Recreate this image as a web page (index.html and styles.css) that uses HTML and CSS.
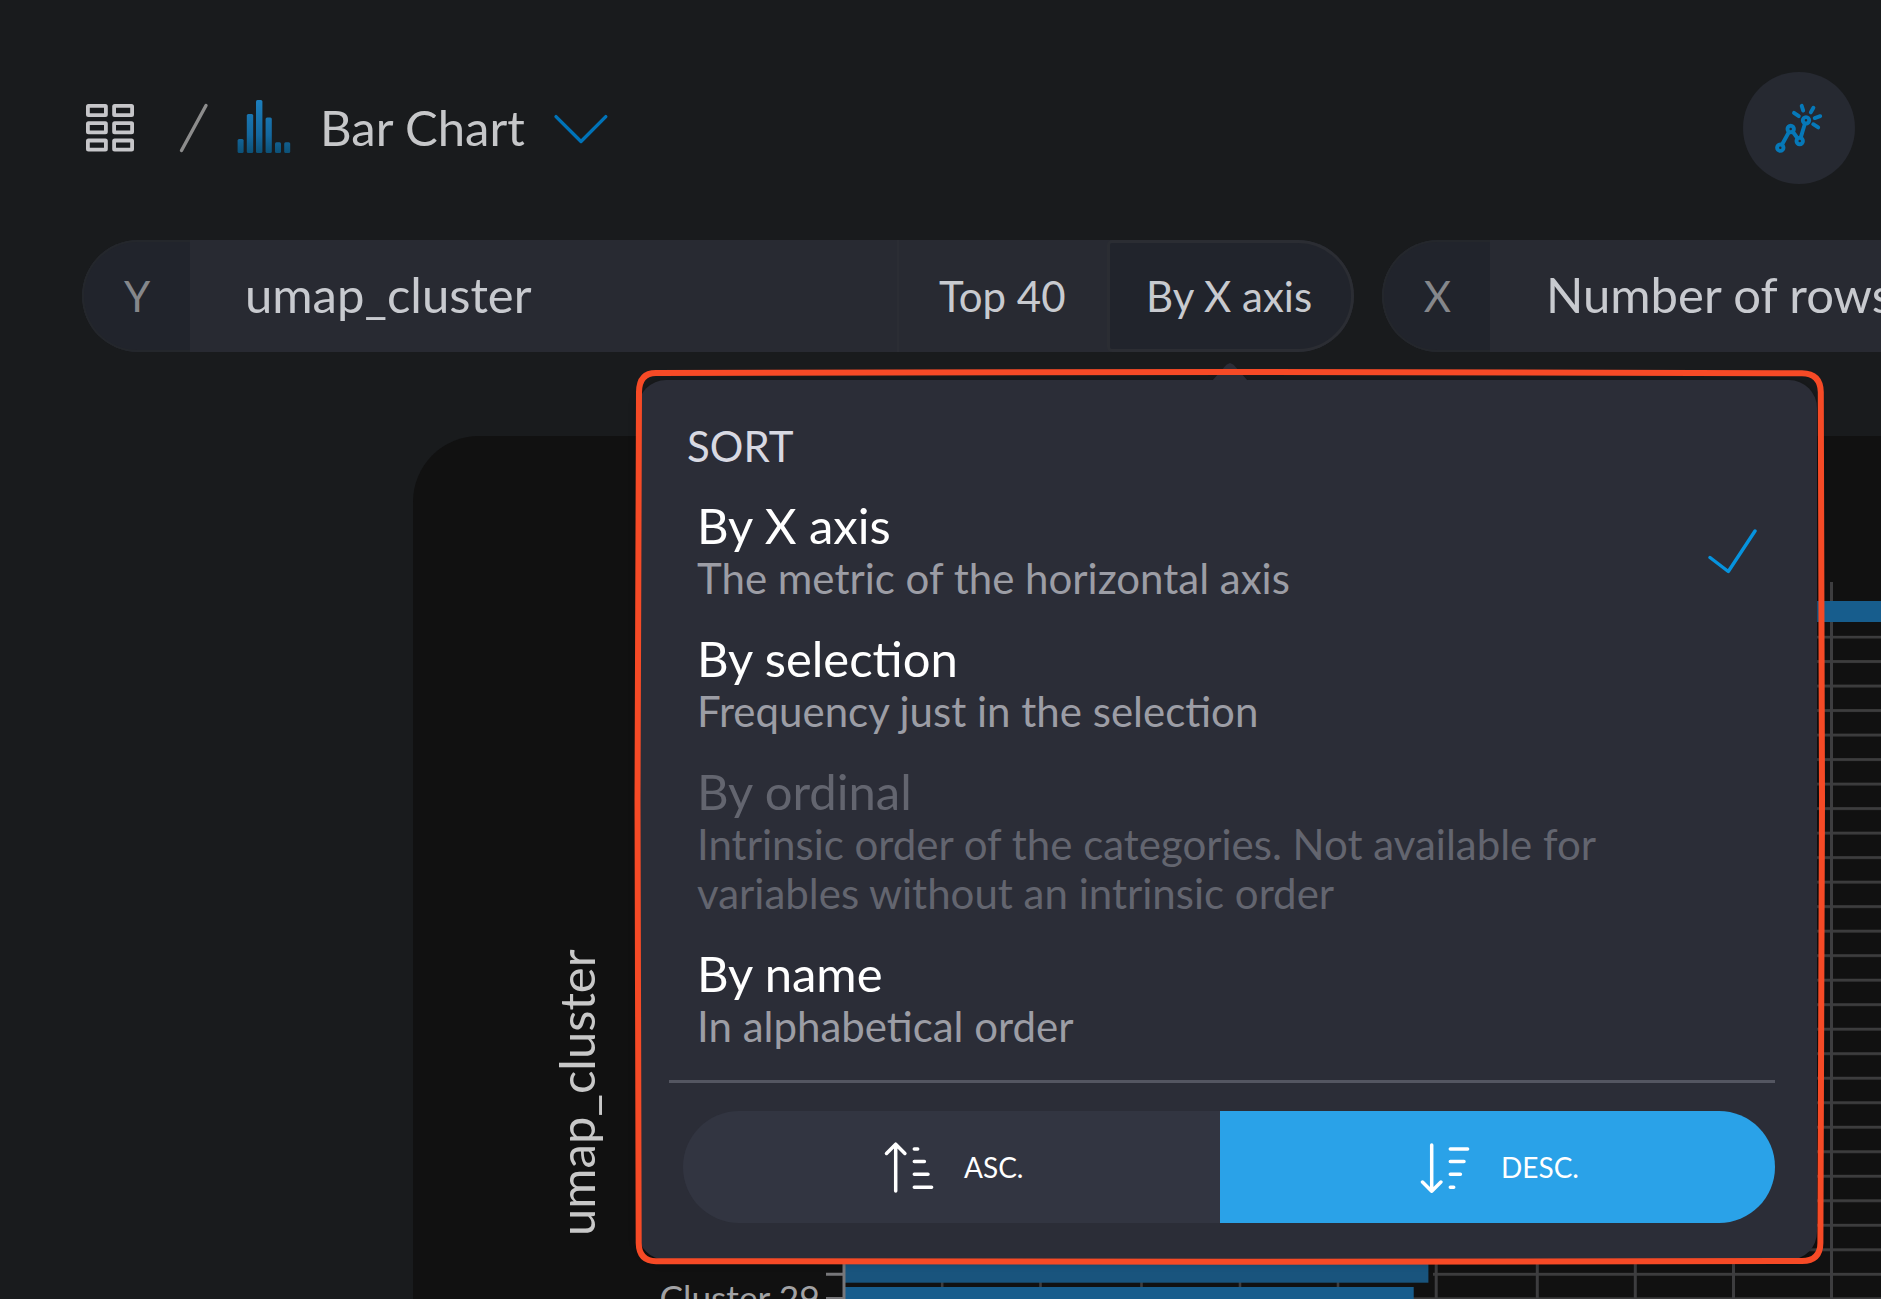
FILE: index.html
```html
<!DOCTYPE html>
<html lang="en">
<head>
<meta charset="utf-8">
<title>Bar Chart</title>
<link rel="stylesheet" href="styles.css">
</head>
<body>
<header class="topbar">
  <svg class="grid-icon" width="48" height="48" viewBox="0 0 48 48" fill="none" stroke="#c6c6c9" stroke-width="3.8">
    <rect x="1.9" y="1.9" width="18" height="9.2" rx=".6"/><rect x="28.1" y="1.9" width="18" height="9.2" rx=".6"/>
    <rect x="1.9" y="19.2" width="18" height="9.2" rx=".6"/><rect x="28.1" y="19.2" width="18" height="9.2" rx=".6"/>
    <rect x="1.9" y="36.5" width="18" height="9.2" rx=".6"/><rect x="28.1" y="36.5" width="18" height="9.2" rx=".6"/>
  </svg>
  <svg class="slash" width="30" height="50" viewBox="0 0 30 50" fill="none" stroke="#8c8c8c" stroke-width="3.4" stroke-linecap="round"><path d="M27 2.5 2.5 47.5"/></svg>
  <svg class="bars-icon" width="54" height="54" viewBox="0 0 54 54">
    <defs><linearGradient id="blue" gradientUnits="userSpaceOnUse" x1="0" y1="0" x2="0" y2="54"><stop offset="0" stop-color="#1c7ebc"/><stop offset=".65" stop-color="#14689f"/><stop offset="1" stop-color="#0c5075"/></linearGradient></defs>
    <g fill="url(#blue)">
      <rect x=".6" y="39" width="6" height="14" rx="1.5"/><rect x="9.8" y="14" width="6.4" height="39" rx="1.5"/><rect x="19" y="0" width="6.4" height="53" rx="1.5"/>
      <rect x="28.6" y="17.6" width="6.2" height="35.4" rx="1.5"/><rect x="38" y="42.3" width="6" height="10.7" rx="1.5"/><rect x="47.2" y="42.3" width="6" height="10.7" rx="1.5"/>
    </g>
  </svg>
  <h1 class="title">Bar Chart</h1>
  <svg class="chevron" width="56" height="32" viewBox="0 0 56 32" fill="none" stroke="#0073b8" stroke-width="3.4" stroke-linecap="round" stroke-linejoin="round"><path d="M3 3.6 28 28.5 52.8 3.6"/></svg>
  <button class="insight">
    <svg width="112" height="112" viewBox="1743 72 112 112" fill="none" stroke="#0678b8" stroke-width="3.9" stroke-linecap="round">
      <circle cx="1780.3" cy="147.7" r="3.2"/><circle cx="1790.7" cy="129" r="3.2"/><circle cx="1799.7" cy="141" r="3.2"/><circle cx="1806" cy="120.3" r="3.2"/>
      <path d="M1782.2 144.3 1788.8 132.3M1793 132 1797.4 138M1800.8 137.4 1804.8 124M1794 112.8l4.8 3.3M1801.7 105.8l1.5 4.8M1813.4 107.8l-2.6 4.6M1820.2 116.2l-5.5 1.9M1813.2 124.2l5 3.2"/>
    </svg>
  </button>
</header>

<section class="axes">
  <div class="pill pill-y">
    <span class="axis">Y</span><span class="field">umap_cluster</span><span class="top">Top 40</span><span class="sort">By X axis</span>
  </div>
  <div class="pill pill-x">
    <span class="axis">X</span><span class="field">Number of rows</span>
  </div>
</section>

<main class="chart">
  <div class="y-title">umap_cluster</div>
  <svg class="plot" width="1220" height="863" viewBox="661 436 1220 863">
    <defs>
      <pattern id="rows" patternUnits="userSpaceOnUse" x="845" y="635.6" width="40" height="24.51"><rect width="40" height="2.8" fill="#3d3d3e"/></pattern>
    </defs>
    <rect x="845" y="635.6" width="1036" height="664" fill="url(#rows)"/>
    <path d="M942.2 582V1299M1040.5 582V1299M1141.5 582V1299M1240 582V1299M1338 582V1299M1436.2 582V1299M1537.3 582V1299M1635.3 582V1299M1733.5 582V1299M1831.5 582V1299" stroke="#3d3d3f" stroke-width="3" fill="none"/>
    <rect x="845" y="601" width="1036" height="21" fill="#175d8d"/>
    <path d="M845 1256H1433V1287H845Z" fill="#111"/>
    <path d="M942.2 1280V1290M1040.5 1280V1290M1141.5 1280V1290M1240 1280V1290M1338 1280V1290" stroke="#3d3d3f" stroke-width="2.6"/>
    <rect x="845" y="1260" width="583.4" height="22.7" fill="#19547d"/>
    <rect x="845" y="1287" width="568.7" height="12" fill="#175d8d"/>
    <path d="M844 1256V1299M826 1274.2H844M826 1298.4H844" stroke="#77777a" stroke-width="3"/>
    <text class="tick" x="659.5" y="1310.5">Cluster 29</text>
  </svg>
</main>

<div class="menu">
  <div class="menu-arrow"></div>
  <h2 class="menu-title">SORT</h2>
  <ul class="options">
    <li class="option">
      <div><div class="name">By X axis</div><div class="desc">The metric of the horizontal axis</div></div>
      <svg class="check" width="50" height="46" viewBox="0 0 50 46" fill="none" stroke="#0693de" stroke-width="3.4" stroke-linecap="round" stroke-linejoin="round"><path d="M3 29.5 21.3 43.5 48 3"/></svg>
    </li>
    <li class="option"><div><div class="name">By selection</div><div class="desc">Frequency just in the selection</div></div></li>
    <li class="option disabled"><div><div class="name">By ordinal</div><div class="desc">Intrinsic order of the categories. Not available for<br>variables without an intrinsic order</div></div></li>
    <li class="option"><div><div class="name">By name</div><div class="desc">In alphabetical order</div></div></li>
  </ul>
  <div class="direction">
    <button class="dir dir-asc">
      <svg width="50" height="52" viewBox="0 0 50 52" fill="none" stroke="#fff" stroke-width="3.5" stroke-linecap="round" stroke-linejoin="round"><path d="M11.7 50V3.5M2.5 12.5 11.7 3.2 20.9 12.5M30.3 8h3.4M30.3 20.4h10.1M30.3 33.3h13.7M30.3 46.2h17.3"/></svg>
      <span>ASC.</span>
    </button>
    <button class="dir dir-desc">
      <svg width="50" height="52" viewBox="0 0 50 52" fill="none" stroke="#fff" stroke-width="3.5" stroke-linecap="round" stroke-linejoin="round"><path d="M11.7 4V50M2.5 41 11.7 50.2 20.9 41M30.3 8h17.3M30.3 20.4h13.7M30.3 33.3h10.1M30.3 46.2h3.4"/></svg>
      <span>DESC.</span>
    </button>
  </div>
</div>

<svg class="highlight" width="1200" height="904" viewBox="630 365 1200 904" fill="none" stroke="#f64a26" stroke-width="6"><path d="M656 373 1230 372 1802 373.2Q1820.4 373.5 1820.8 392L1822 800 1820.4 1243Q1820.2 1261 1802 1261L1230 1261.8 656 1261.2Q639 1261 638.7 1243L637.5 800 639 392Q639.2 373 656 373Z"/></svg>
</body>
</html>
```
FILE: styles.css
```css
* { box-sizing: border-box; }
body {
  position: relative;
  width: 1881px;
  height: 1299px;
  margin: 0;
  overflow: hidden;
  background: #191b1d;
  color: #c8cacf;
  font-family: Lato, "Open Sans", sans-serif;
}
h1, h2, ul { margin: 0; padding: 0; font-weight: 400; list-style: none; }
button { border: 0; padding: 0; font: inherit; color: inherit; }
svg { display: block; flex: none; }

.topbar {
  display: flex;
  align-items: flex-start;
  height: 240px;
  padding: 72px 26px 0 86px;
}
.grid-icon { margin-top: 32px; }
.slash { margin: 31px 0 0 45px; }
.bars-icon { margin: 28px 0 0 28px; }
.title {
  width: 233px;
  margin: 26px 0 0 29px;
  font-size: 49px;
  line-height: 58px;
  color: #c6c7c9;
  white-space: nowrap;
}
.chevron { margin-top: 41px; }
.insight { width: 112px; height: 112px; margin-left: auto; border-radius: 50%; background: #262931; }

.axes { display: flex; gap: 28px; width: 1881px; height: 112px; padding-left: 82px; overflow: hidden; }
.pill {
  display: flex;
  align-items: stretch;
  height: 112px;
  line-height: 112px;
  white-space: nowrap;
  overflow: hidden;
  background: #282a32;
}
.pill-y { flex: none; width: 1272px; border-radius: 56px; }
.pill-x { flex: 1; min-width: 0; border-radius: 56px 0 0 56px; }
.axis {
  flex: none;
  width: 108px;
  border: 2px solid #24272c;
  border-right: 0;
  border-radius: 56px 0 0 56px;
  background: #21242c;
  color: #85878b;
  font-size: 42px;
  line-height: 108px;
  text-align: center;
}
.pill-x .axis { padding-left: 1px; }
.field { flex: 1; min-width: 0; padding-left: 55px; font-size: 49px; line-height: 109px; }
.pill-x .field { padding-left: 56px; }
.top { width: 210px; border-left: 2px solid #2b2d34; padding-left: 40px; font-size: 42px; }
.sort {
  width: 247px;
  border: 3px solid #2b2d33;
  border-radius: 5px 56px 56px 5px;
  padding-left: 36px;
  background: #21242c;
  font-size: 42px;
  line-height: 106px;
}

.chart {
  display: flex;
  justify-content: space-between;
  height: 863px;
  margin: 84px 0 0 413px;
  border-radius: 66px 0 0 0;
  background: #111;
}
.y-title {
  width: 248px;
  padding: 63px 134px 0 0;
  font-size: 49px;
  line-height: 58px;
  color: #c8c8c8;
  writing-mode: vertical-rl;
  transform: rotate(180deg);
}
.tick { font-size: 35.3px; fill: #a2a2a4; }

.menu {
  position: absolute;
  left: 638px;
  top: 380px;
  width: 1179px;
  height: 880px;
  padding: 41px 42px 0 31px;
  border-radius: 28px;
  background: #2b2d37;
  box-shadow: 0 2px 10px rgba(0, 0, 0, .35);
}
.menu-arrow {
  position: absolute;
  left: 574px;
  top: -17px;
  width: 36px;
  height: 18px;
  background: #2b2d37;
  clip-path: polygon(0 100%, 40% 10%, 50% 0, 60% 10%, 100% 100%);
}
.menu-title { padding-left: 18px; font-size: 42px; line-height: 50px; color: #d8d9e2; }
.options { height: 582px; margin-top: 27px; padding: 0 18px 0 28px; }
.option { display: flex; justify-content: space-between; margin-bottom: 28px; white-space: nowrap; }
.name { padding-bottom: 2px; font-size: 49px; line-height: 54px; color: #fff; }
.desc { font-size: 42px; line-height: 49px; color: #9c9da5; }
.disabled .name, .disabled .desc { color: #63656f; }
.check { margin-top: 30px; }
.direction {
  display: flex;
  border-top: 3px solid #545661;
  padding: 28px 0 0 14px;
}
.dir { display: flex; align-items: center; height: 112px; color: #fff; font-size: 28px; }
.dir span { margin-left: 30px; }
.dir-asc { width: 537px; padding-left: 201px; border-radius: 56px 0 0 56px; background: #323541; }
.dir-desc { width: 555px; padding-left: 200px; border-radius: 0 56px 56px 0; background: #2aa2e8; }
.dir-desc span { margin-left: 31px; }

.highlight { position: absolute; left: 630px; top: 365px; }
```
